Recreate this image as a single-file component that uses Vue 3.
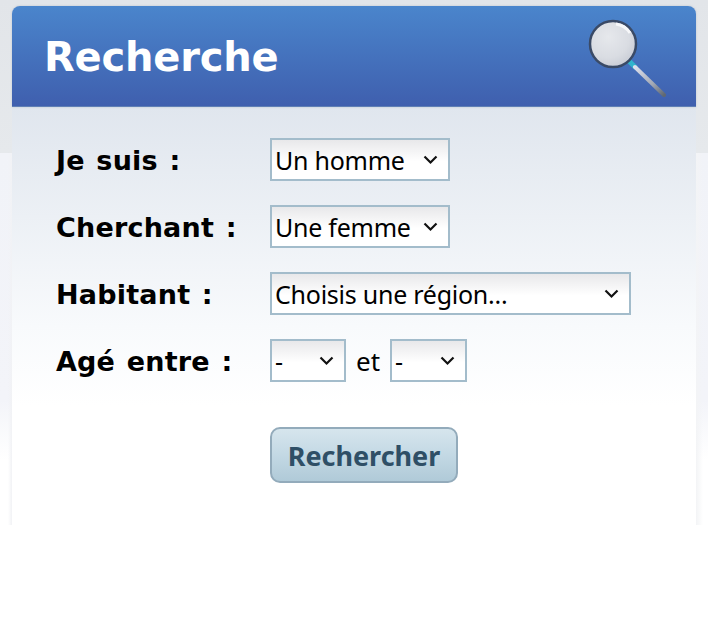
<script setup>
const chevron = "url(\"data:image/svg+xml,%3Csvg xmlns='http://www.w3.org/2000/svg' width='15' height='10'%3E%3Cpath d='M1.5 1.5 7.5 7.5l6-6' fill='none' stroke='%23111' stroke-width='2.2'/%3E%3C/svg%3E\")"
</script>

<template>
  <div class="page" :style="{ '--chevron': chevron }">
    <div class="panel">
      <div class="head">
        <h1>Recherche</h1>
        <svg class="loupe" width="84" height="84" viewBox="0 0 84 84">
          <defs>
            <radialGradient id="glass" cx="0.4" cy="0.35" r="0.75">
              <stop offset="0" stop-color="#e6e8ec" />
              <stop offset="0.6" stop-color="#d9dce2" />
              <stop offset="1" stop-color="#c4c8d2" />
            </radialGradient>
            <linearGradient id="stick" x1="0" y1="0" x2="1" y2="1">
              <stop offset="0" stop-color="#dde0ec" />
              <stop offset="0.6" stop-color="#a3a9b5" />
              <stop offset="1" stop-color="#5f6873" />
            </linearGradient>
          </defs>
          <line x1="42" y1="42" x2="50" y2="50" stroke="#30b4cc" stroke-width="5" />
          <line x1="49" y1="49" x2="78" y2="77" stroke="url(#stick)" stroke-width="4" stroke-linecap="round" />
          <circle cx="27" cy="26" r="23" fill="url(#glass)" stroke="#3a4a66" stroke-width="2.5" />
          <path d="M30 6a20 20 0 0 1 14 9" fill="none" stroke="#f6f7f9" stroke-width="3" />
        </svg>
      </div>
      <form class="body" @submit.prevent>
        <label class="lbl">Je suis :</label>
        <div class="ctl">
          <select class="w180"><option>Un homme</option></select>
        </div>
        <label class="lbl">Cherchant :</label>
        <div class="ctl">
          <select class="w180"><option>Une femme</option></select>
        </div>
        <label class="lbl">Habitant :</label>
        <div class="ctl">
          <select class="w361"><option>Choisis une région...</option></select>
        </div>
        <label class="lbl">Agé entre :</label>
        <div class="ctl">
          <select class="w76"><option>-</option></select>
          <span class="et">et</span>
          <select class="w77"><option>-</option></select>
        </div>
        <div class="ctl submit">
          <button type="submit">Rechercher</button>
        </div>
      </form>
    </div>
  </div>
</template>

<style scoped>
.page {
  height: 624px;
  box-sizing: border-box;
  padding: 6px 12px 0;
  overflow: hidden;
  background:
    linear-gradient(90deg, #ffffff00, #f1f2f5) 8px 153px / 4px 372px no-repeat,
    linear-gradient(90deg, #f3f4f6, #ffffff00) 696px 153px / 7px 372px no-repeat,
    linear-gradient(180deg, #e2e5e9 0, #e6e9ec 153px, transparent 153px),
    linear-gradient(180deg, #f1f3f8 153px, #f3f4f9 400px, #ffffff 460px);
}
.panel {
  height: 520px;
  border-radius: 8px 8px 0 0;
  background: linear-gradient(180deg, #e0e6ee 101px, #f8fafc 320px, #ffffff 400px);
}
.head {
  height: 101px;
  box-sizing: border-box;
  padding: 10px 26px 0 33px;
  display: flex;
  justify-content: space-between;
  align-items: flex-start;
  border-radius: 8px 8px 0 0;
  background: linear-gradient(180deg, #4a85cc 0, #3f5fae 100%);
  border-bottom: 1px solid #5f7fb5;
  box-shadow: 0 0 2px rgba(150, 160, 175, 0.5);
}
h1 {
  margin: 11px 0 0 -1px;
  color: #fff;
  font: bold 40px/60px "DejaVu Sans", sans-serif;
  letter-spacing: -0.2px;
}
.loupe {
  margin-top: 2px;
  flex: none;
  filter: blur(0.6px);
}
.body {
  display: grid;
  grid-template-columns: 214px 1fr;
  row-gap: 24px;
  padding: 31px 0 0 44px;
  align-items: center;
}
.lbl {
  padding-top: 3px;
  font: bold 27px/40px "DejaVu Sans", sans-serif;
  letter-spacing: 0.2px;
  word-spacing: 2px;
  color: #000;
}
.ctl {
  display: flex;
  align-items: center;
  height: 43px;
}
select {
  appearance: none;
  height: 43px;
  box-sizing: border-box;
  border: 2px solid #a3bccb;
  border-radius: 0;
  padding: 0 0 0 3px;
  color: #000;
  font: 25px "Noto Sans", sans-serif;
  letter-spacing: -0.25px;
  background: var(--chevron) no-repeat right 10px center,
    linear-gradient(180deg, #e8e8ea 0, #ffffff 55%);
}
.w180 { width: 180px; }
.w361 { width: 361px; }
.w76 { width: 76px; }
.w77 { width: 77px; }
.et {
  width: 44px;
  text-align: center;
  font: 26px "Noto Sans", sans-serif;
}
.submit {
  grid-column: 2;
  height: 56px;
  margin-top: 21px;
}
button {
  width: 188px;
  height: 56px;
  box-sizing: border-box;
  border: 2px solid #93abbb;
  border-radius: 10px;
  background: linear-gradient(180deg, #d6e5ed 0, #c5dae5 45%, #b0cad8 100%);
  color: #2f4f66;
  font: bold 27px "Noto Sans", sans-serif;
  padding: 0;
}
</style>
